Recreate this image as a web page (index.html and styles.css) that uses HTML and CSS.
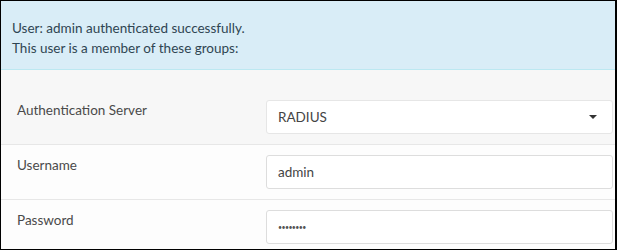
FILE: index.html
```html
<!DOCTYPE html>
<html lang="en">
<head>
  <meta charset="UTF-8" />
  <title>Test Authentication</title>
  <link rel="stylesheet" href="styles.css">
</head>
<body>
  <div class="frame">
    <div class="alert">
      User: admin authenticated successfully.<br>
      This user is a member of these groups:
    </div>

    <table class="form-table">
      <tr class="first">
        <td class="label">Authentication Server</td>
        <td>
          <div class="select">
            <span>RADIUS</span>
            <span class="caret"></span>
          </div>
        </td>
      </tr>
      <tr>
        <td class="label">Username</td>
        <td><div class="field">admin</div></td>
      </tr>
      <tr>
        <td class="label">Password</td>
        <td><div class="field dots">&bull;&bull;&bull;&bull;&bull;&bull;&bull;&bull;</div></td>
      </tr>
    </table>
  </div>
</body>
</html>
```

FILE: styles.css
```css
body {
  margin: 0;
  padding: 0;
  font-family: Lato, "Liberation Sans", sans-serif;
  font-size: 13.5px;
  background: #fff;
}

.frame {
  width: 614px;
  height: 248px;
  border: 1px solid #000;
  border-right-width: 2px;
  overflow: hidden;
  background: #f7f7f7;
}

.alert {
  background: #d9edf7;
  border-bottom: 1px solid #bce8f1;
  color: #2f4552;
  padding: 17px 11px 11px;
  line-height: 20px;
  height: 40px;
}

.form-table {
  width: 100%;
  border-collapse: collapse;
}

.form-table td {
  padding: 10px 0;
  vertical-align: top;
  border-bottom: 1px solid #e7e7e7;
}

.form-table tr {
  background: #fdfdfd;
}

.form-table tr.first {
  background: #f7f7f7;
}

.form-table tr.first td {
  padding-top: 30px;
}

.form-table td.label {
  width: 249px;
  padding-left: 16px;
  color: #4a4a4a;
  line-height: 20px;
  padding-top: 10px;
}

.form-table tr.first td.label {
  padding-top: 30px;
}

.select,
.field {
  box-sizing: border-box;
  width: 347px;
  height: 34px;
  background: #fff;
  border: 1px solid #ddd;
  border-radius: 3px;
  padding: 0 12px 0 11px;
  color: #444;
  display: flex;
  align-items: center;
  justify-content: space-between;
}

.select {
  border-color: #e6e6e6;
}

.caret {
  width: 0;
  height: 0;
  border-left: 4px solid transparent;
  border-right: 4px solid transparent;
  border-top: 4px solid #333;
  margin-right: 3px;
}

.dots {
  font-size: 7px;
  letter-spacing: -0.6px;
  color: #555;
  justify-content: flex-start;
}
```
